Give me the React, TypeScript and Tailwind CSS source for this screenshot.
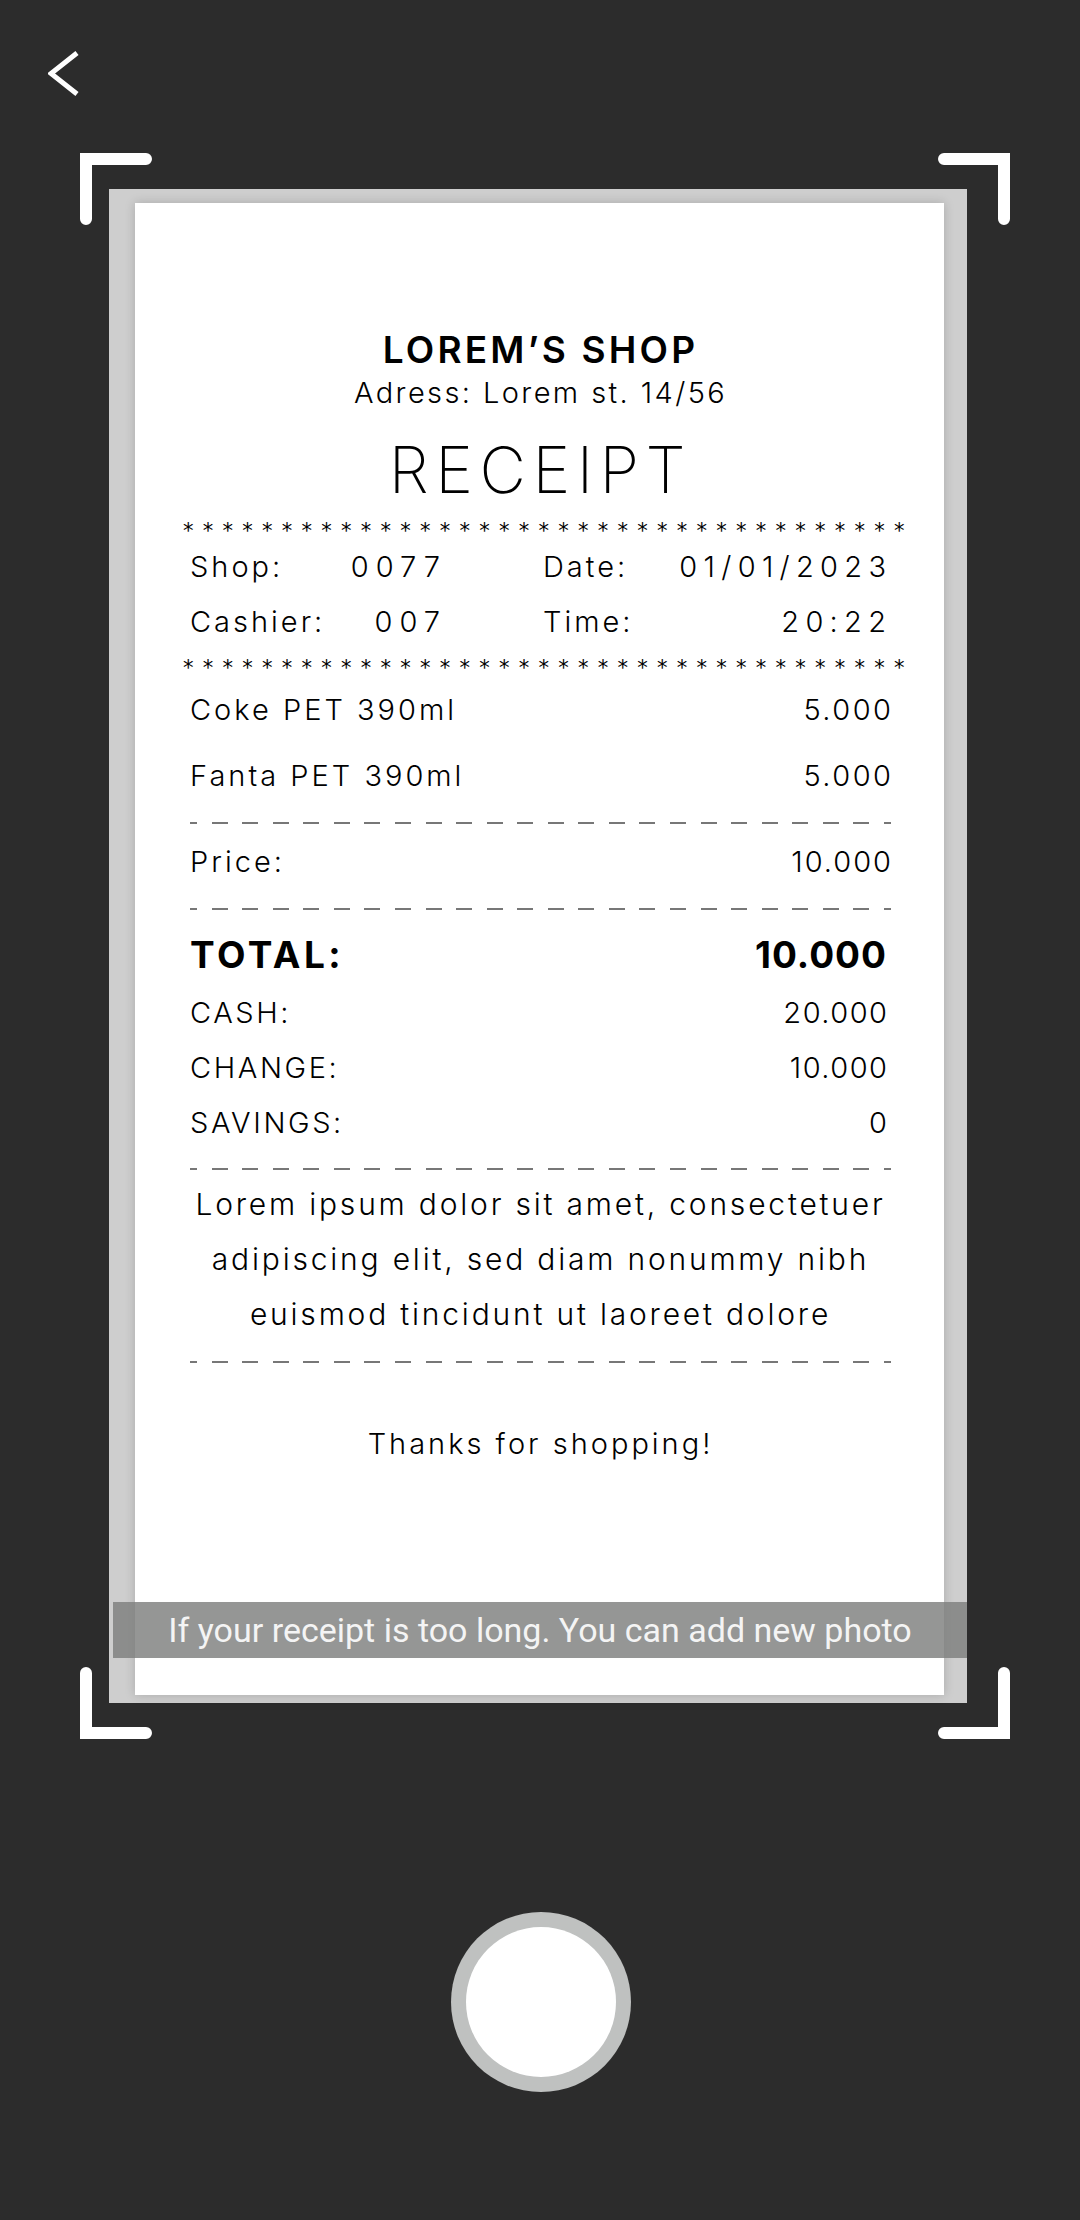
import React from 'react';

const items = [
  { name: 'Coke PET 390ml', price: '5.000' },
  { name: 'Fanta PET 390ml', price: '5.000' },
];

const totals = [
  { label: 'CASH:', value: '20.000', mt: 'mt-[22px]' },
  { label: 'CHANGE:', value: '10.000', mt: 'mt-[23px]' },
  { label: 'SAVINGS:', value: '0', mt: 'mt-[23px]' },
];

function Stars() {
  return (
    <div className="ml-[-7px] mr-[-13px] h-[20px] flex justify-between font-['DejaVu_Sans',sans-serif] font-normal text-[21px] leading-[20px] text-black">
      {Array.from({ length: 37 }).map((_, i) => (
        <span key={i} className="w-[10px] text-center">*</span>
      ))}
    </div>
  );
}

function Dashes() {
  return (
    <div className="h-[2px] flex justify-between">
      <span className="w-[7px] h-[2px] bg-[#777]" />
      {Array.from({ length: 22 }).map((_, i) => (
        <span key={i} className="w-4 h-[2px] bg-[#777]" />
      ))}
      <span className="w-[7px] h-[2px] bg-[#777]" />
    </div>
  );
}

function Bracket({ className }: { className: string }) {
  return (
    <svg className={className} width="72" height="72" viewBox="0 0 72 72" fill="none">
      <path d="M6 66V6H66" stroke="#fff" strokeWidth="12" strokeLinecap="round" />
    </svg>
  );
}

export default function App() {
  return (
    <div className="w-[1080px] h-[2220px] bg-[#2c2c2c] flex flex-col font-['Inter','Noto_Sans',sans-serif]">
      {/* Back */}
      <div className="h-[153px] pl-[48px] pt-[51px]">
        <svg width="32" height="46" viewBox="0 0 32 46" fill="none">
          <path d="M29 2L3 22.5L29 43" stroke="#fff" strokeWidth="5" />
        </svg>
      </div>

      {/* Scan area */}
      <div className="relative ml-[80px] w-[930px] h-[1586px]">
        <Bracket className="absolute left-0 top-0" />
        <Bracket className="absolute right-0 top-0 rotate-90" />
        <Bracket className="absolute left-0 bottom-0 -rotate-90" />
        <Bracket className="absolute right-0 bottom-0 rotate-180" />

        <div className="relative ml-[29px] mt-[36px] w-[858px] h-[1514px] bg-[#cecece] pt-[14px] pl-[26px] pb-[8px] flex">
          <div className="w-[809px] min-w-0 bg-white shadow-[0_0_10px_rgba(0,0,0,0.18)] pl-[55px] pr-[53px] pt-[127px] flex flex-col text-black font-light">
            <div className="h-[40px] leading-[40px] text-center text-[37px] font-semibold tracking-[3.2px]">LOREM’S SHOP</div>
            <div className="mt-[8px] h-[30px] leading-[30px] text-center text-[29px] tracking-[2.4px]">Adress: Lorem st. 14/56</div>
            <div className="mt-[29px] h-[66px] leading-[66px] text-center text-[64px] font-[250] tracking-[6.5px]">RECEIPT</div>

            <div className="mt-[18px]"><Stars /></div>

            <div className="mt-[10px] h-[32px] leading-[32px] flex text-[29px] tracking-[3px]">
              <div className="w-[250px] flex justify-between"><span>Shop:</span><span className="tracking-[7px] mr-[-7px]">0077</span></div>
              <div className="ml-[103px] w-[343px] flex justify-between"><span>Date:</span><span className="tracking-[6.3px] mr-[-6.3px]">01/01/2023</span></div>
            </div>
            <div className="mt-[23px] h-[32px] leading-[32px] flex text-[29px] tracking-[3px]">
              <div className="w-[250px] flex justify-between"><span>Cashier:</span><span className="tracking-[7px] mr-[-7px]">007</span></div>
              <div className="ml-[103px] w-[343px] flex justify-between"><span>Time:</span><span className="tracking-[6.3px] mr-[-6.3px]">20:22</span></div>
            </div>

            <div className="mt-[20px]"><Stars /></div>

            <div className="mt-[16px] flex flex-col gap-[34px]">
              {items.map((it) => (
                <div key={it.name} className="h-[32px] leading-[32px] flex justify-between text-[29px] tracking-[3px]">
                  <span>{it.name}</span>
                  <span className="tracking-[2.5px] mr-[-2.5px]">{it.price}</span>
                </div>
              ))}
            </div>

            <div className="mt-[30px]"><Dashes /></div>

            <div className="mt-[22px] h-[32px] leading-[32px] flex justify-between text-[29px] tracking-[3px]">
              <span>Price:</span>
              <span className="tracking-[2px] mr-[-2px]">10.000</span>
            </div>

            <div className="mt-[30px]"><Dashes /></div>

            <div className="mt-[25px] h-[40px] leading-[40px] flex justify-between pr-[5px] text-[37px] font-bold">
              <span className="tracking-[3.5px]">TOTAL:</span>
              <span className="tracking-[1px] mr-[-1px]">10.000</span>
            </div>

            {totals.map((t) => (
              <div key={t.label} className={`${t.mt} h-[32px] leading-[32px] flex justify-between pr-[4px] text-[29px]`}>
                <span className="tracking-[2.6px]">{t.label}</span>
                <span className="tracking-[1.5px] mr-[-1.5px]">{t.value}</span>
              </div>
            ))}

            <div className="mt-[29px]"><Dashes /></div>

            <div className="mt-[7px] text-center text-[30px] leading-[55px] tracking-[2.8px]">
              Lorem ipsum dolor sit amet, consectetuer
              <br />
              adipiscing elit, sed diam nonummy nibh
              <br />
              euismod tincidunt ut laoreet dolore
            </div>

            <div className="mt-[19px]"><Dashes /></div>

            <div className="mt-[65px] h-[32px] leading-[32px] text-center text-[29px] tracking-[3px]">Thanks for shopping!</div>
          </div>

          <div className="absolute left-[4px] top-[1413px] w-[854px] h-[56px] bg-[rgba(126,127,126,0.82)] flex items-center justify-center font-['Roboto',sans-serif] text-[34px] text-[#f4f4f4]">
            If your receipt is too long. You can add new photo
          </div>
        </div>
      </div>

      {/* Shutter */}
      <div className="mt-[173px] ml-[451px] w-[180px] h-[180px] rounded-full bg-[#bfc1c0] p-[15px]">
        <div className="w-full h-full rounded-full bg-white" />
      </div>
    </div>
  );
}
